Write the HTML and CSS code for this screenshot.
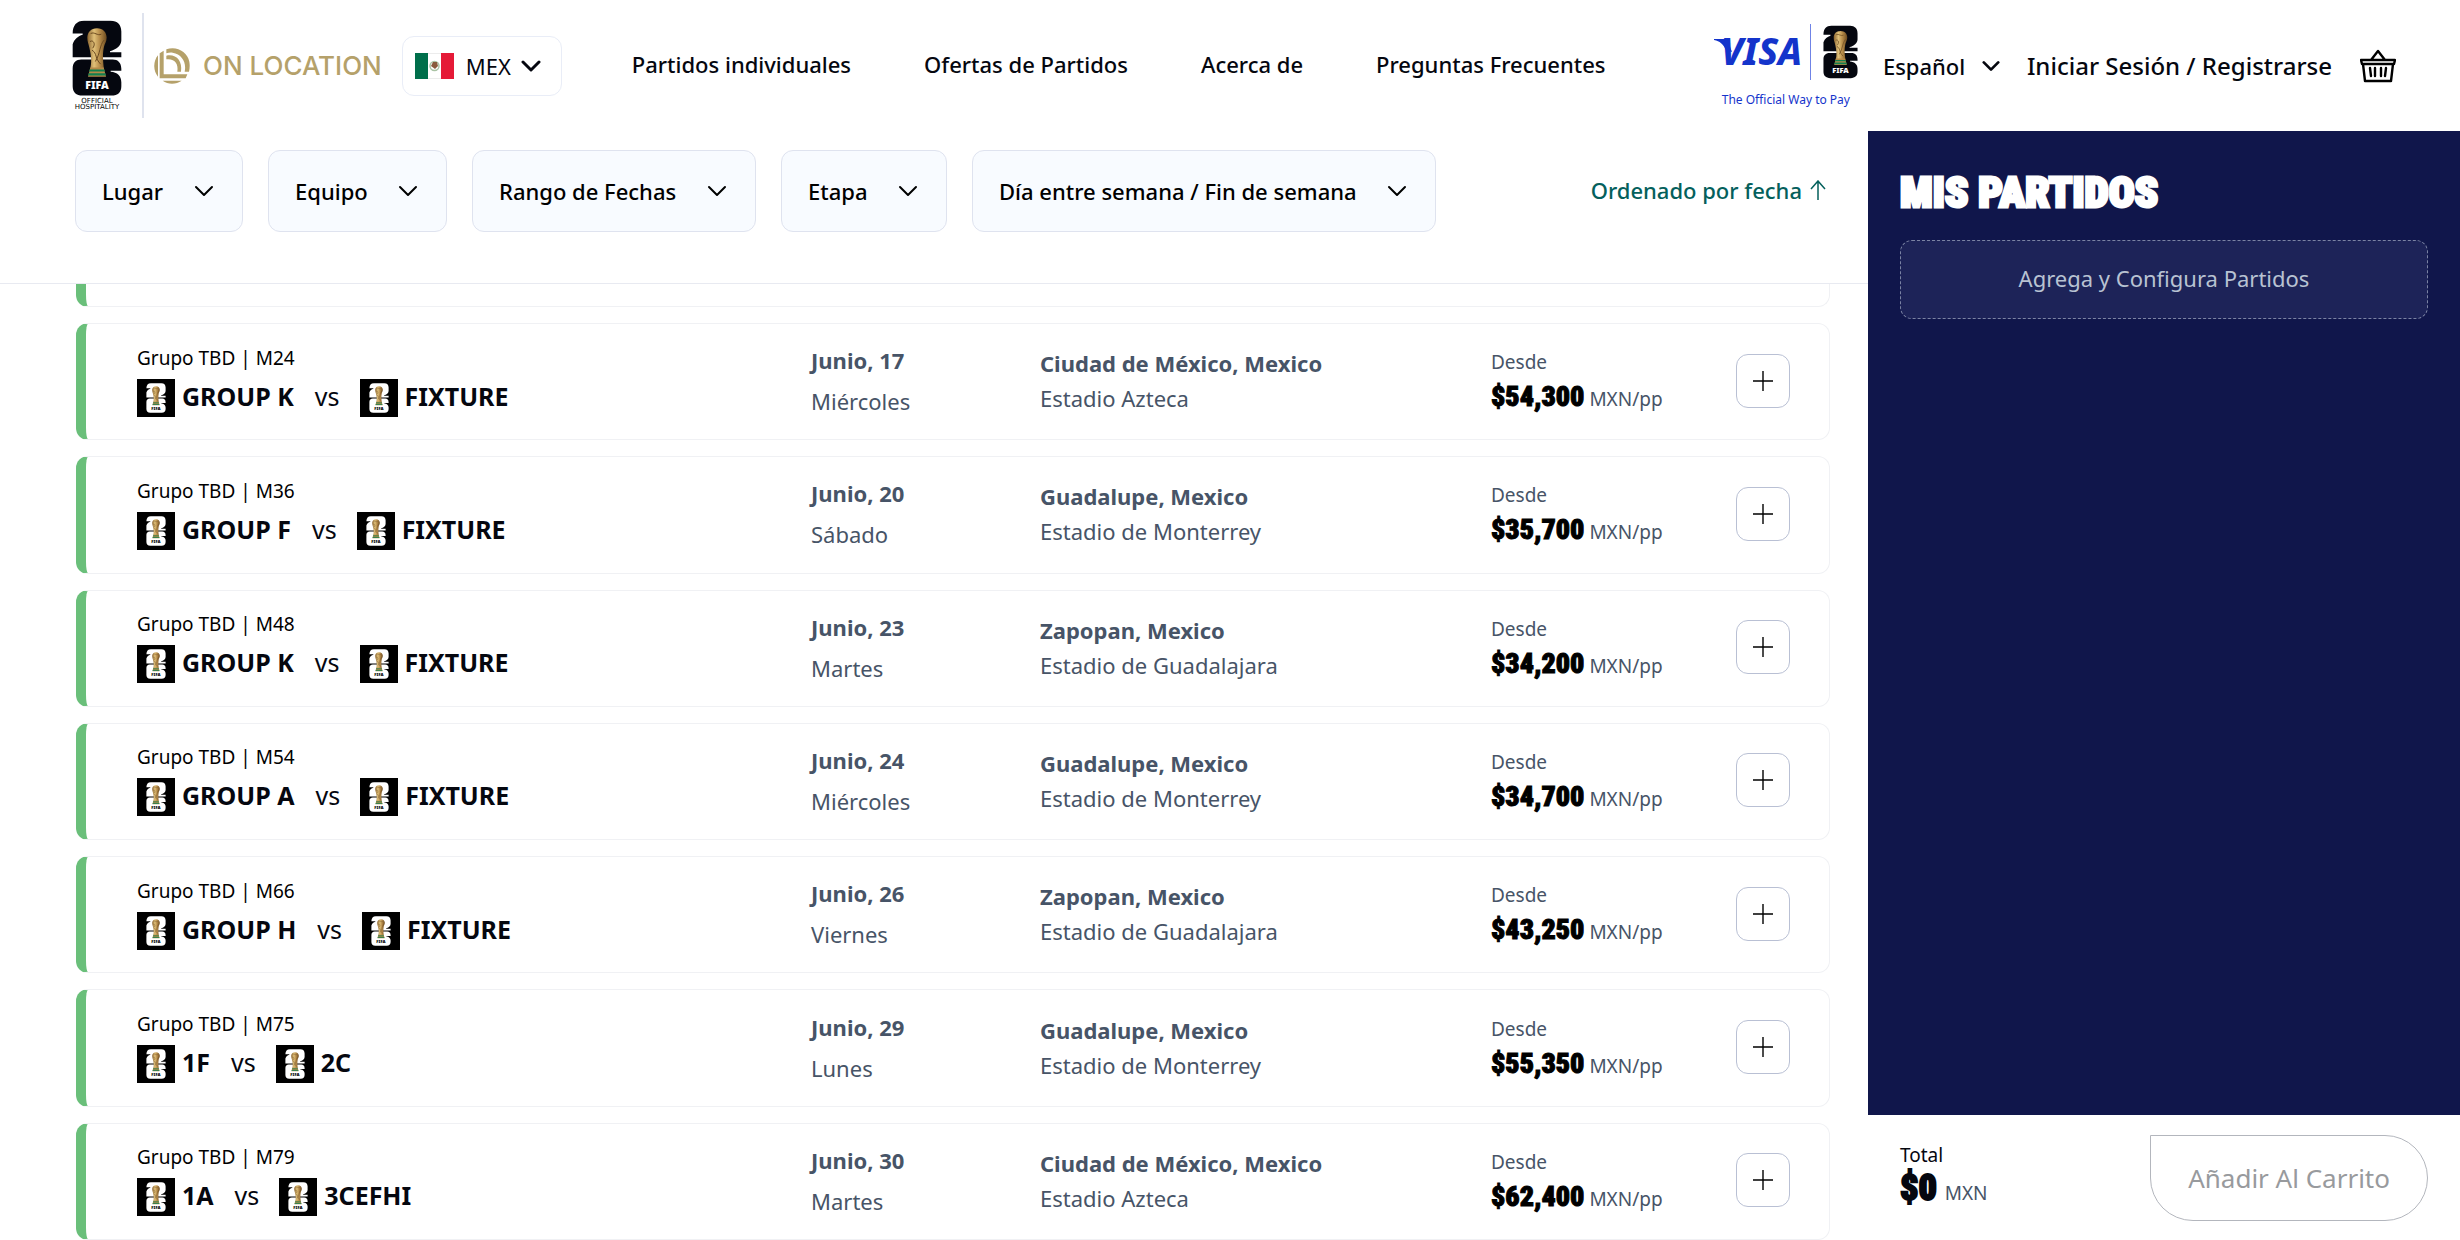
FILE: index.html
```
<!DOCTYPE html>
<html lang="es">
<head>
    <meta charset="UTF-8">
    <meta name="viewport" content="width=device-width, initial-scale=1">
    <title>Partidos individuales</title>
    <link rel="stylesheet" href="styles.css">
</head>
<body>
    <!-- shared icons -->
    <svg class="sprite" aria-hidden="true">
        <defs>
            <linearGradient id="gold" x1="0" x2="1" y1="0" y2="0">
                <stop offset="0" stop-color="#8a6430"/>
                <stop offset="0.35" stop-color="#e0c078"/>
                <stop offset="0.65" stop-color="#b58a48"/>
                <stop offset="1" stop-color="#6b4a20"/>
            </linearGradient>
        </defs>
        <symbol id="fifa26" viewBox="36 36 150 228">
            <path fill="currentColor" d="M38 76C38 52 50 38 72 38H152C172 38 184 50 184 70V96C184 112 168 124 150 129V132H184V147H38V108C44 92 54 84 68 80V76H38Z"/>
            <path fill="currentColor" d="M64 154H158C174 154 184 164 184 182V188H152V191C172 192 184 204 184 222V234C184 252 174 262 154 262H68C48 262 38 252 38 234V180C38 164 48 154 64 154Z"/>
            <path fill="url(#gold)" d="M111 60C129 60 140 72 140 88C140 100 134 106 132 116C128 134 128 150 132 184H90C96 164 94 144 88 118C85 106 82 100 82 88C82 72 93 60 111 60Z"/>
            <path fill="none" stroke="#6b4a20" stroke-width="3" d="M92 76C104 70 112 84 124 78M90 100C100 94 108 108 98 120M132 96C118 112 122 134 106 160M96 126C112 136 104 150 122 168"/>
            <path fill="#b58a48" d="M91 178H131L138 206H84Z"/>
            <path fill="#12804f" d="M89 184H133L135 190H87ZM86 195H136L138 202H84Z"/>
            <text class="fifa-word" x="111" y="242" text-anchor="middle">FIFA</text>
        </symbol>
        <symbol id="chevron" viewBox="0 0 20 12">
            <path d="M2 2L10 10L18 2" fill="none" stroke="currentColor" stroke-linecap="round" stroke-linejoin="round"/>
        </symbol>
        <symbol id="plus" viewBox="0 0 20 20">
            <path d="M10 0V20M0 10H20" fill="none" stroke="currentColor" stroke-width="1.4"/>
        </symbol>
    </svg>

    <header class="header">
        <a class="brand" href="#" aria-label="FIFA Official Hospitality">
            <svg class="brand-logo" viewBox="36 36 150 272">
                <use href="#fifa26" x="36" y="36" width="150" height="228"/>
                <text class="brand-text" x="111" y="286" text-anchor="middle">OFFICIAL</text>
                <text class="brand-text" x="111" y="304" text-anchor="middle">HOSPITALITY</text>
            </svg>
        </a>
        <a class="on-location" href="#">
            <svg viewBox="284 117 108 108" fill="#b5a16a">
                <path d="M296 139V203C281 186 281 156 296 139Z"/>
                <path d="M301 133L313 125V196H384L379 208H301Z"/>
                <path d="M321 121C352 110 384 128 390 158C392 170 391 179 389 188H376C382 160 368 136 340 131C333 130 327 131 321 133Z"/>
                <path d="M321 140C350 134 370 155 365 188H354C358 164 346 148 321 151Z"/>
                <path d="M310 215H367C350 227 326 227 310 215Z"/>
            </svg>
            <span>ON LOCATION</span>
        </a>
        <label class="country">
            <svg class="flag" viewBox="0 0 39 26">
                <path fill="#fff" d="M0 0H39V26H0Z"/>
                <path fill="#006f4b" d="M0 0H13V26H0Z"/>
                <path fill="#e51a37" d="M26 0H39V26H26Z"/>
                <path fill="none" stroke="#ececec" d="M13 0.5H26M13 25.5H26"/>
                <circle cx="19.500" cy="13" r="4.500" fill="none" stroke="#a9c3a4" stroke-width="1.500"/>
                <path fill="#8a5a3c" d="M18 9H22L23 13L20 16L16 13Z"/>
            </svg>
            <select aria-label="País"><option>MEX</option></select>
            <svg class="chevron"><use href="#chevron"/></svg>
        </label>
        <nav class="nav">
            <a href="#">Partidos individuales</a>
            <a href="#">Ofertas de Partidos</a>
            <a href="#">Acerca de</a>
            <a href="#">Preguntas Frecuentes</a>
        </nav>
        <div class="tools">
            <a class="visa" href="#">
                <span class="visa-logos">
                    <svg class="visa-logo" viewBox="0 0 86 28" fill="#1434cb">
                        <path d="M0 1H13L18 14L12 12C9 6 6 3 0 2Z"/>
                        <text x="7" y="27">VISA</text>
                    </svg>
                    <svg class="visa-fifa"><use href="#fifa26"/></svg>
                </span>
                <span class="visa-tag">The Official Way to Pay</span>
            </a>
            <label class="language">
                <select aria-label="Idioma"><option>Español</option></select>
                <svg class="chevron"><use href="#chevron"/></svg>
            </label>
            <a class="login" href="#">Iniciar Sesión / Registrarse</a>
            <button class="basket" type="button" aria-label="Carrito">
                <svg viewBox="0 0 36 34" fill="none" stroke="#000" stroke-width="2.400" stroke-linejoin="round" stroke-linecap="round">
                    <path d="M11 11L18 2L25 11M1 11H35L34 15H2ZM3 15L5 32H31L33 15"/>
                    <path d="M10 19L11 27M15 19V27M21 19V27M26 19L25 27"/>
                </svg>
            </button>
        </div>
    </header>

    <main class="main">
        <section class="matches">
            <div class="filters">
                <label class="filter"><select aria-label="Lugar"><option>Lugar</option></select><svg class="chevron"><use href="#chevron"/></svg></label>
                <label class="filter"><select aria-label="Equipo"><option>Equipo</option></select><svg class="chevron"><use href="#chevron"/></svg></label>
                <label class="filter"><select aria-label="Rango de Fechas"><option>Rango de Fechas</option></select><svg class="chevron"><use href="#chevron"/></svg></label>
                <label class="filter"><select aria-label="Etapa"><option>Etapa</option></select><svg class="chevron"><use href="#chevron"/></svg></label>
                <label class="filter"><select aria-label="Día entre semana / Fin de semana"><option>Día entre semana / Fin de semana</option></select><svg class="chevron"><use href="#chevron"/></svg></label>
                <button class="sort" type="button">
                    Ordenado por fecha
                    <svg viewBox="0 0 16 20" fill="none" stroke="currentColor" stroke-width="1.500"><path d="M8 20V2M1 9L8 1L15 9"/></svg>
                </button>
            </div>

            <ul class="list">
                <li class="card card-cut"></li>
                <li class="card">
                    <div class="match">
                        <p class="group">Grupo TBD | M24</p>
                        <div class="teams">
                            <svg class="badge"><use href="#fifa26"/></svg><strong>GROUP K</strong>
                            <span class="vs">vs</span>
                            <svg class="badge"><use href="#fifa26"/></svg><strong>FIXTURE</strong>
                        </div>
                    </div>
                    <div class="date"><strong>Junio, 17</strong><span>Miércoles</span></div>
                    <div class="venue"><strong>Ciudad de México, Mexico</strong><span>Estadio Azteca</span></div>
                    <div class="price"><span>Desde</span><p><b>$54,300</b> MXN/pp</p></div>
                    <button class="add" type="button" aria-label="Agregar M24"><svg><use href="#plus"/></svg></button>
                </li>
                <li class="card">
                    <div class="match">
                        <p class="group">Grupo TBD | M36</p>
                        <div class="teams">
                            <svg class="badge"><use href="#fifa26"/></svg><strong>GROUP F</strong>
                            <span class="vs">vs</span>
                            <svg class="badge"><use href="#fifa26"/></svg><strong>FIXTURE</strong>
                        </div>
                    </div>
                    <div class="date"><strong>Junio, 20</strong><span>Sábado</span></div>
                    <div class="venue"><strong>Guadalupe, Mexico</strong><span>Estadio de Monterrey</span></div>
                    <div class="price"><span>Desde</span><p><b>$35,700</b> MXN/pp</p></div>
                    <button class="add" type="button" aria-label="Agregar M36"><svg><use href="#plus"/></svg></button>
                </li>
                <li class="card">
                    <div class="match">
                        <p class="group">Grupo TBD | M48</p>
                        <div class="teams">
                            <svg class="badge"><use href="#fifa26"/></svg><strong>GROUP K</strong>
                            <span class="vs">vs</span>
                            <svg class="badge"><use href="#fifa26"/></svg><strong>FIXTURE</strong>
                        </div>
                    </div>
                    <div class="date"><strong>Junio, 23</strong><span>Martes</span></div>
                    <div class="venue"><strong>Zapopan, Mexico</strong><span>Estadio de Guadalajara</span></div>
                    <div class="price"><span>Desde</span><p><b>$34,200</b> MXN/pp</p></div>
                    <button class="add" type="button" aria-label="Agregar M48"><svg><use href="#plus"/></svg></button>
                </li>
                <li class="card">
                    <div class="match">
                        <p class="group">Grupo TBD | M54</p>
                        <div class="teams">
                            <svg class="badge"><use href="#fifa26"/></svg><strong>GROUP A</strong>
                            <span class="vs">vs</span>
                            <svg class="badge"><use href="#fifa26"/></svg><strong>FIXTURE</strong>
                        </div>
                    </div>
                    <div class="date"><strong>Junio, 24</strong><span>Miércoles</span></div>
                    <div class="venue"><strong>Guadalupe, Mexico</strong><span>Estadio de Monterrey</span></div>
                    <div class="price"><span>Desde</span><p><b>$34,700</b> MXN/pp</p></div>
                    <button class="add" type="button" aria-label="Agregar M54"><svg><use href="#plus"/></svg></button>
                </li>
                <li class="card">
                    <div class="match">
                        <p class="group">Grupo TBD | M66</p>
                        <div class="teams">
                            <svg class="badge"><use href="#fifa26"/></svg><strong>GROUP H</strong>
                            <span class="vs">vs</span>
                            <svg class="badge"><use href="#fifa26"/></svg><strong>FIXTURE</strong>
                        </div>
                    </div>
                    <div class="date"><strong>Junio, 26</strong><span>Viernes</span></div>
                    <div class="venue"><strong>Zapopan, Mexico</strong><span>Estadio de Guadalajara</span></div>
                    <div class="price"><span>Desde</span><p><b>$43,250</b> MXN/pp</p></div>
                    <button class="add" type="button" aria-label="Agregar M66"><svg><use href="#plus"/></svg></button>
                </li>
                <li class="card">
                    <div class="match">
                        <p class="group">Grupo TBD | M75</p>
                        <div class="teams">
                            <svg class="badge"><use href="#fifa26"/></svg><strong>1F</strong>
                            <span class="vs">vs</span>
                            <svg class="badge"><use href="#fifa26"/></svg><strong>2C</strong>
                        </div>
                    </div>
                    <div class="date"><strong>Junio, 29</strong><span>Lunes</span></div>
                    <div class="venue"><strong>Guadalupe, Mexico</strong><span>Estadio de Monterrey</span></div>
                    <div class="price"><span>Desde</span><p><b>$55,350</b> MXN/pp</p></div>
                    <button class="add" type="button" aria-label="Agregar M75"><svg><use href="#plus"/></svg></button>
                </li>
                <li class="card">
                    <div class="match">
                        <p class="group">Grupo TBD | M79</p>
                        <div class="teams">
                            <svg class="badge"><use href="#fifa26"/></svg><strong>1A</strong>
                            <span class="vs">vs</span>
                            <svg class="badge"><use href="#fifa26"/></svg><strong>3CEFHI</strong>
                        </div>
                    </div>
                    <div class="date"><strong>Junio, 30</strong><span>Martes</span></div>
                    <div class="venue"><strong>Ciudad de México, Mexico</strong><span>Estadio Azteca</span></div>
                    <div class="price"><span>Desde</span><p><b>$62,400</b> MXN/pp</p></div>
                    <button class="add" type="button" aria-label="Agregar M79"><svg><use href="#plus"/></svg></button>
                </li>
            </ul>
        </section>

        <aside class="panel">
            <div class="panel-body">
                <h2>MIS PARTIDOS</h2>
                <p class="empty">Agrega y Configura Partidos</p>
            </div>
            <div class="panel-footer">
                <div class="total">
                    <span>Total</span>
                    <p><b>$0</b> MXN</p>
                </div>
                <button class="cart" type="button" disabled>Añadir Al Carrito</button>
            </div>
        </aside>
    </main>
</body>
</html>
```

FILE: styles.css
```
*{
    box-sizing: border-box;
    margin: 0;
    padding: 0;
}

body{
    display: flex;
    flex-direction: column;
    min-height: 100vh;
    background-color: #fff;
    color: #000;
    font-family: "Noto Sans", sans-serif;
    font-size: 22px;
    line-height: 30px;
    --logo-word: #fff;
}

a{
    color: inherit;
    text-decoration: none;
}

button, select{
    border: 0;
    background: none;
    color: inherit;
    font: inherit;
    cursor: pointer;
}

select{
    appearance: none;
    outline: none;
}

svg{
    flex: none;
}

.sprite{
    position: absolute;
    width: 0;
    height: 0;
}

.fifa-word{
    fill: var(--logo-word);
    font: 900 32px "Noto Sans", sans-serif;
}

.chevron{
    width: 20px;
    height: 12px;
    stroke-width: 2;
    pointer-events: none;
}

/* header */
.header{
    display: flex;
    align-items: center;
    height: 131px;
    padding: 0 64px 0 72px;
    font-weight: 500;
    color: #05070f;
}

.header .chevron{
    stroke-width: 3;
}

.brand{
    display: flex;
    align-items: center;
    height: 105px;
    padding-right: 20px;
    border-right: 2px solid #dfe3ee;
}

.brand-logo{
    width: 50px;
    height: 91px;
}

.brand-text{
    font: 21px "DejaVu Sans", sans-serif;
}

.on-location{
    display: flex;
    align-items: center;
    gap: 13px;
    margin-left: 10px;
    color: #b5a16a;
    font-family: Inter, sans-serif;
    font-size: 26px;
}

.on-location svg{
    width: 36px;
    height: 36px;
}

.country{
    display: flex;
    align-items: center;
    height: 60px;
    margin-left: 20px;
    padding: 0 20px 0 12px;
    border: 1px solid #e9edf7;
    border-radius: 12px;
    font-weight: 400;
}

.flag{
    width: 39px;
    height: 26px;
    margin-right: 12px;
}

.country .chevron{
    margin-left: 9px;
}

.nav{
    display: flex;
    gap: 73px;
    margin-left: 70px;
    padding-bottom: 3px;
}

.tools{
    display: flex;
    align-items: center;
    margin-left: auto;
}

.visa{
    display: flex;
    flex-direction: column;
    align-items: center;
    gap: 12px;
    margin-right: 25px;
}

.visa-logos{
    display: flex;
    align-items: center;
}

.visa-logo{
    width: 86px;
    height: 28px;
    overflow: visible;
    font: italic 800 37px "Noto Sans", sans-serif;
}

.visa-fifa{
    width: 48px;
    height: 56px;
    margin-left: 10px;
    padding: 1px 0 1px 12px;
    border-left: 1px solid #6f83e6;
}

.visa-tag{
    color: #1434cb;
    font-size: 12px;
    font-weight: 400;
    line-height: 16px;
}

.language{
    display: flex;
    align-items: center;
    gap: 16px;
}

.language .chevron{
    width: 18px;
}

.login{
    margin-left: 27px;
    font-size: 24px;
}

.basket{
    display: flex;
    margin-left: 28px;
}

.basket svg{
    width: 36px;
    height: 34px;
}

/* layout */
.main{
    display: grid;
    grid-template-columns: 1fr 592px;
    flex: 1;
}

.matches{
    display: flex;
    flex-direction: column;
}

.filters{
    display: flex;
    align-items: flex-start;
    gap: 25px;
    padding: 19px 42px 51px 75px;
    border-bottom: 1px solid #e8eaf1;
    font-weight: 500;
}

.filter{
    display: flex;
    align-items: center;
    gap: 30px;
    height: 82px;
    padding: 0 28px 0 26px;
    border: 1px solid #dfe3ef;
    border-radius: 12px;
    background-color: #f8fbff;
}

.sort{
    display: flex;
    align-items: center;
    gap: 8px;
    height: 82px;
    margin-left: auto;
    padding-bottom: 2px;
    color: #04605c;
}

.sort svg{
    width: 16px;
    height: 20px;
}

/* match list, the first card is scrolled under the filters */
.list{
    display: grid;
    grid-template-rows: 23px;
    grid-auto-rows: 1fr;
    gap: 16px;
    flex: 1;
    padding: 0 38px 0 76px;
    list-style: none;
}

.card{
    display: grid;
    grid-template-columns: 674fr 229fr 451fr 245fr 54px;
    align-items: center;
    padding: 0 39px 2px 51px;
    border: 1px solid #f0f1f4;
    border-left: 10px solid #6abf7a;
    border-radius: 12px;
    color: #475467;
}

.card-cut{
    border-top: 0;
    border-radius: 0 0 12px 12px;
}

.group{
    margin-bottom: 8px;
    color: #000;
    font-size: 19px;
    line-height: 26px;
}

.teams{
    display: flex;
    color: #05070f;
    font-size: 25px;
    line-height: 35px;
}

.teams strong{
    margin-left: 7px;
}

.vs{
    margin: 0 20px 0 21px;
}

.badge{
    width: 38px;
    height: 38px;
    padding: 4px 0;
    background-color: #000;
    color: #fff;
    --logo-word: #000;
}

.date, .venue, .price{
    display: flex;
    flex-direction: column;
}

.date{
    gap: 11px;
}

.venue{
    gap: 5px;
}

.price{
    gap: 9px;
    font-size: 19px;
    line-height: 26px;
}

.price b, .total b, .panel h2{
    font-family: "Roboto Condensed", Roboto, sans-serif;
    font-weight: 900;
}

.price b{
    color: #000;
    font-size: 28px;
    -webkit-text-stroke: 1px #000;
}

.add{
    display: flex;
    align-items: center;
    justify-content: center;
    height: 54px;
    border: 1px solid #b9c0d4;
    border-radius: 12px;
    color: #000;
}

.add svg{
    width: 20px;
    height: 20px;
}

/* side panel */
.panel{
    display: flex;
    flex-direction: column;
}

.panel-body{
    flex: 1;
    padding: 36px 32px;
    background-color: #10164b;
}

.panel h2{
    margin-bottom: 23px;
    color: #fff;
    font-size: 43px;
    line-height: 50px;
    -webkit-text-stroke: 3px #fff;
}

.empty{
    padding: 22px 23px 25px;
    border: 1px dashed #7b83a3;
    border-radius: 12px;
    background-color: #1d2358;
    color: #b8c2d2;
    text-align: center;
}

.panel-footer{
    display: flex;
    align-items: center;
    justify-content: space-between;
    height: 125px;
    padding: 0 32px;
    background-color: #fff;
}

.total{
    padding-bottom: 5px;
    color: #475467;
    font-size: 19px;
    line-height: 26px;
}

.total span, .total b{
    color: #05070f;
}

.total b{
    margin-right: 3px;
    font-size: 36px;
    line-height: 40px;
    -webkit-text-stroke: 2px #05070f;
}

.cart{
    height: 86px;
    padding: 0 37px;
    border: 1px solid #b3b6bd;
    border-radius: 0 43px 43px 43px;
    color: #989a9d;
    font-size: 26px;
}
```
